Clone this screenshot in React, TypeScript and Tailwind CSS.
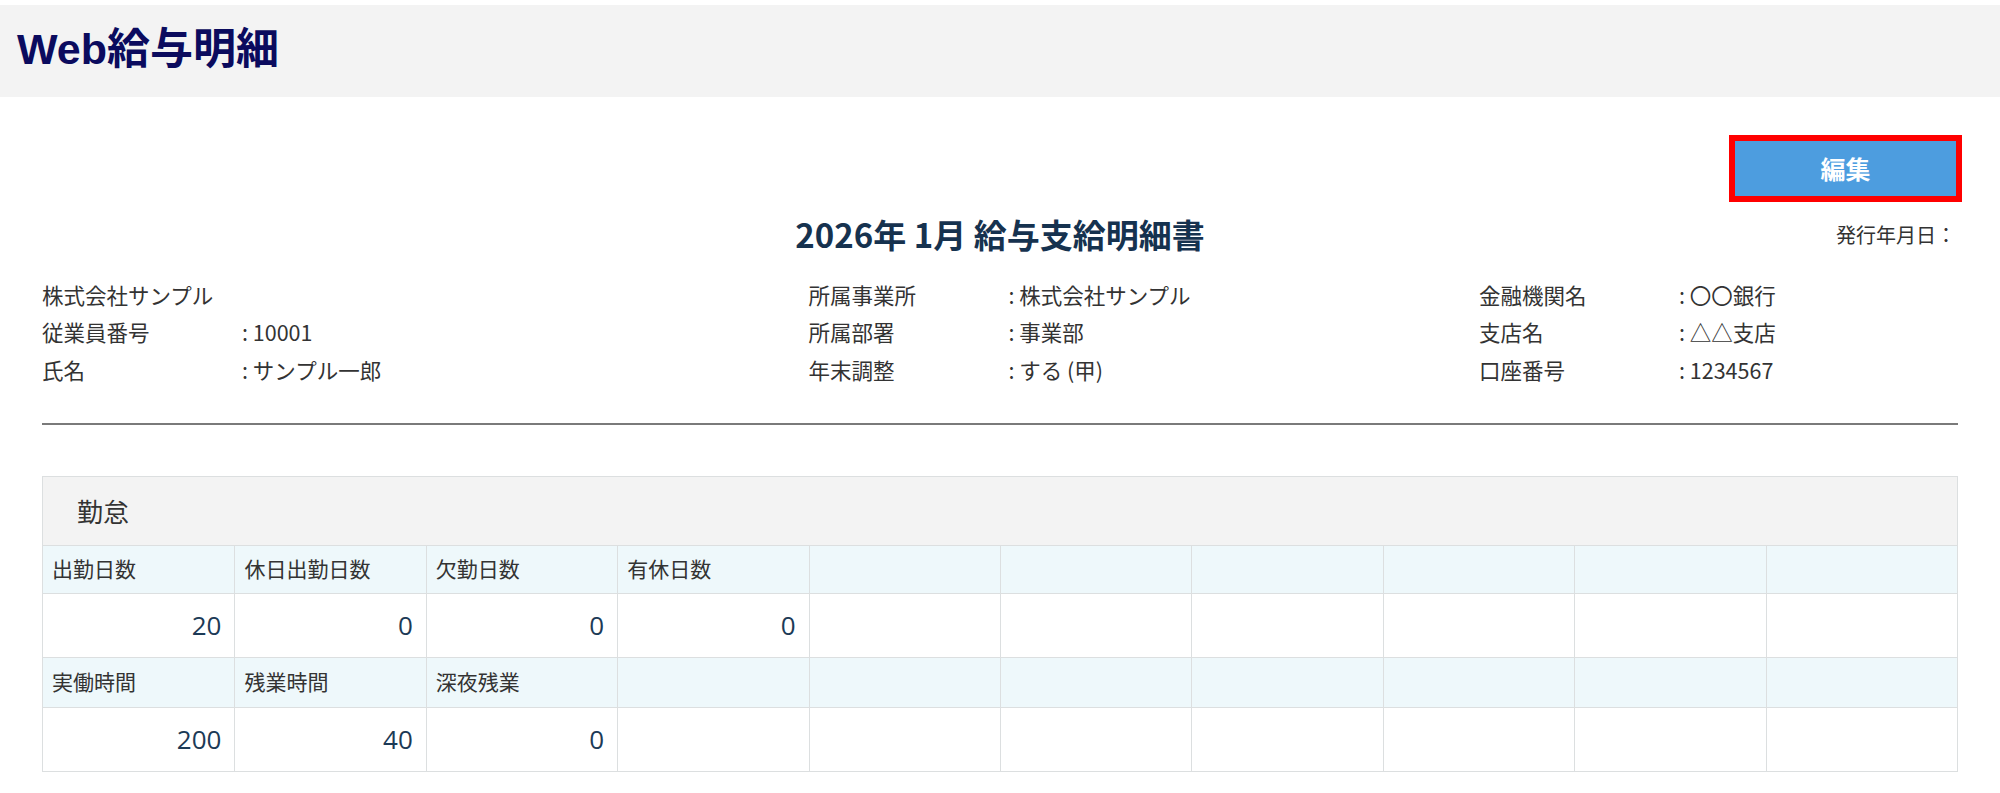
import React from "react";

const CJK = "font-['Noto_Sans_CJK_JP',sans-serif]";

function InfoRow({ label, value }: { label: string; value?: string }) {
  return (
    <div className="flex h-[37.5px] items-center">
      <div className="w-[200px] shrink-0 whitespace-nowrap">{label}</div>
      {value !== undefined && <div className="whitespace-nowrap">:&nbsp;{value}</div>}
    </div>
  );
}

const row1Labels = ["出勤日数", "休日出勤日数", "欠勤日数", "有休日数", "", "", "", "", "", ""];
const row1Values = ["20", "0", "0", "0", "", "", "", "", "", ""];
const row2Labels = ["実働時間", "残業時間", "深夜残業", "", "", "", "", "", "", ""];
const row2Values = ["200", "40", "0", "", "", "", "", "", "", ""];

function LabelRow({ labels, h }: { labels: string[]; h: string }) {
  return (
    <div className={`grid grid-cols-10 bg-[#eef8fb] border-t border-[#dcdfe0] ${h}`}>
      {labels.map((l, i) => (
        <div
          key={i}
          className={`flex items-center pl-[9px] text-[21px] text-[#333] whitespace-nowrap ${i > 0 ? "border-l border-[#dcdfe0]" : ""}`}
        >
          {l}
        </div>
      ))}
    </div>
  );
}

function ValueRow({ values }: { values: string[] }) {
  return (
    <div className="grid grid-cols-10 bg-white border-t border-[#dcdfe0] h-[64px]">
      {values.map((v, i) => (
        <div
          key={i}
          className={`flex items-center justify-end pr-[13px] text-[26px] text-[#1c3a56] font-['Open_Sans','Noto_Sans_CJK_JP',sans-serif] ${i > 0 ? "border-l border-[#dcdfe0]" : ""}`}
        >
          {v}
        </div>
      ))}
    </div>
  );
}

export default function App() {
  return (
    <div className={`min-h-[793px] bg-white ${CJK}`}>
      <header className="mt-[5px] h-[92px] bg-[#f3f3f3] flex items-center pl-[17px]">
        <h1 className="text-[43px] font-bold text-[#0b0b5e] leading-none font-['Liberation_Sans','Noto_Sans_CJK_JP',sans-serif] pb-[4px]">
          Web給与明細
        </h1>
      </header>

      <main className="px-[42px]">
        <div className="flex justify-end mt-[38px] -mr-[4px]">
          <button className="w-[233px] h-[67px] border-[6px] border-[#ff0000] bg-[#4d9ddf] text-white text-[25px] font-bold flex items-center justify-center">
            編集
          </button>
        </div>

        <div className="grid grid-cols-[1fr_auto_1fr] items-center h-[40px] mt-[8px]">
          <div />
          <div className="text-[33px] font-bold text-[#16324f] whitespace-nowrap">2026年 1月 給与支給明細書</div>
          <div className="justify-self-end text-[20px] text-[#333] pr-[2px]">発行年月日：</div>
        </div>

        <div className="grid grid-cols-[40%_35%_25%] mt-[26px] text-[21.5px] text-[#333]">
          <div>
            <InfoRow label="株式会社サンプル" />
            <InfoRow label="従業員番号" value="10001" />
            <InfoRow label="氏名" value="サンプル一郎" />
          </div>
          <div>
            <InfoRow label="所属事業所" value="株式会社サンプル" />
            <InfoRow label="所属部署" value="事業部" />
            <InfoRow label="年末調整" value="する (甲)" />
          </div>
          <div>
            <InfoRow label="金融機関名" value="〇〇銀行" />
            <InfoRow label="支店名" value="△△支店" />
            <InfoRow label="口座番号" value="1234567" />
          </div>
        </div>

        <div className="mt-[34px] h-[2px] bg-[#7a7a7a]" />

        <section className="mt-[51px] border border-[#dcdfe0]">
          <div className="h-[68px] bg-[#f3f3f3] flex items-center pl-[34px] text-[26px] text-[#333]">勤怠</div>
          <LabelRow labels={row1Labels} h="h-[48px]" />
          <ValueRow values={row1Values} />
          <LabelRow labels={row2Labels} h="h-[50px]" />
          <ValueRow values={row2Values} />
        </section>
      </main>
    </div>
  );
}
